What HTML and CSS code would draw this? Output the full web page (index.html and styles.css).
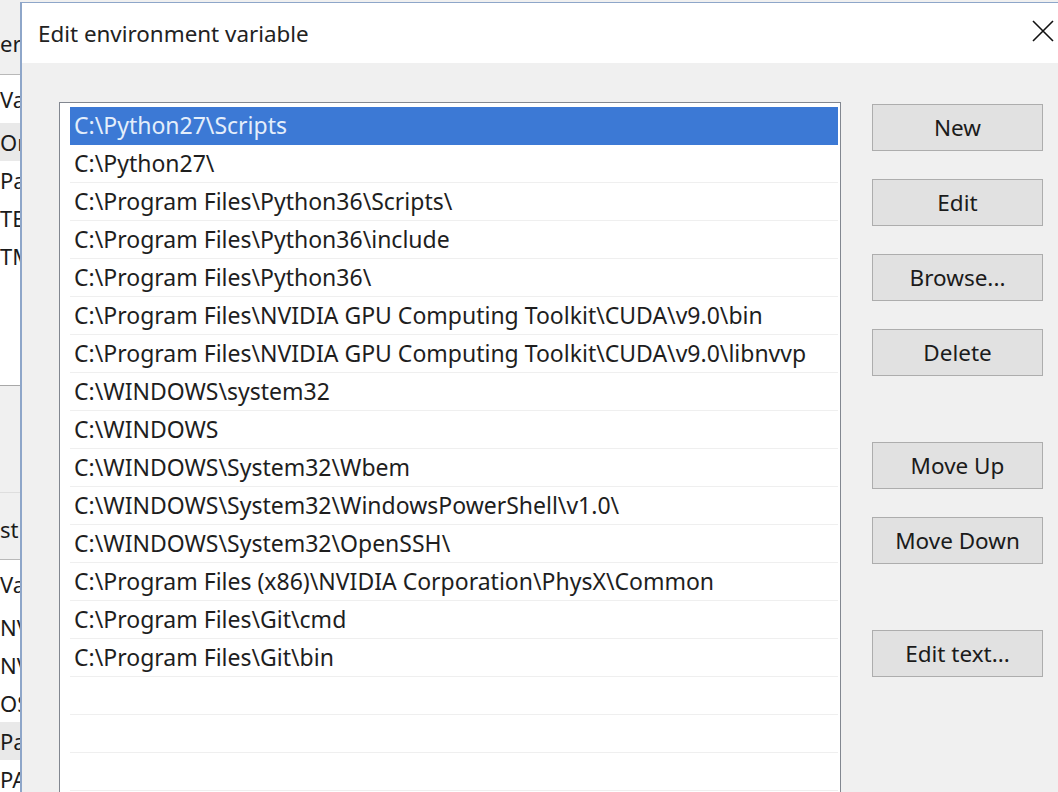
FILE: index.html
```html
<!DOCTYPE html>
<html lang="en">

<head>
    <meta charset="UTF-8">
    <meta name="viewport" content="width=device-width, initial-scale=1.0">
    <title>Edit environment variable</title>
    <link rel="stylesheet" href="styles.css">
</head>

<body>

    <div class="screen">

        <!-- the Environment Variables window peeking out on the left -->
        <div class="behind">
            <div class="behind__label">er</div>
            <div class="behind__list">
                <div class="behind__head">Va</div>
                <div class="behind__row behind__row--selected">On</div>
                <div class="behind__row">Pa</div>
                <div class="behind__row">TE</div>
                <div class="behind__row">TM</div>
            </div>
            <div class="behind__buttons"></div>
            <div class="behind__label behind__label--system">st</div>
            <div class="behind__list behind__list--system">
                <div class="behind__head">Va</div>
                <div class="behind__row">NV</div>
                <div class="behind__row">NV</div>
                <div class="behind__row">OS</div>
                <div class="behind__row behind__row--selected">Pa</div>
                <div class="behind__row">PA</div>
            </div>
        </div>

        <div class="dialog">
            <div class="dialog__titlebar">
                <span class="dialog__title">Edit environment variable</span>
                <button class="dialog__close" aria-label="Close">
                    <svg width="22" height="22" viewBox="0 0 22 22">
                        <path d="M1 1 L21 21 M21 1 L1 21" stroke="#111" stroke-width="1.6" fill="none" />
                    </svg>
                </button>
            </div>

            <div class="dialog__body">
                <ul class="paths">
                    <li class="paths__item paths__item--selected">C:\Python27\Scripts</li>
                    <li class="paths__item">C:\Python27\</li>
                    <li class="paths__item">C:\Program Files\Python36\Scripts\</li>
                    <li class="paths__item">C:\Program Files\Python36\include</li>
                    <li class="paths__item">C:\Program Files\Python36\</li>
                    <li class="paths__item">C:\Program Files\NVIDIA GPU Computing Toolkit\CUDA\v9.0\bin</li>
                    <li class="paths__item">C:\Program Files\NVIDIA GPU Computing Toolkit\CUDA\v9.0\libnvvp</li>
                    <li class="paths__item">C:\WINDOWS\system32</li>
                    <li class="paths__item">C:\WINDOWS</li>
                    <li class="paths__item">C:\WINDOWS\System32\Wbem</li>
                    <li class="paths__item">C:\WINDOWS\System32\WindowsPowerShell\v1.0\</li>
                    <li class="paths__item">C:\WINDOWS\System32\OpenSSH\</li>
                    <li class="paths__item">C:\Program Files (x86)\NVIDIA Corporation\PhysX\Common</li>
                    <li class="paths__item">C:\Program Files\Git\cmd</li>
                    <li class="paths__item">C:\Program Files\Git\bin</li>
                    <li class="paths__item"></li>
                    <li class="paths__item"></li>
                    <li class="paths__item"></li>
                </ul>

                <div class="actions">
                    <div class="actions__group">
                        <button class="actions__btn">New</button>
                        <button class="actions__btn">Edit</button>
                        <button class="actions__btn">Browse...</button>
                        <button class="actions__btn">Delete</button>
                    </div>
                    <div class="actions__group">
                        <button class="actions__btn">Move Up</button>
                        <button class="actions__btn">Move Down</button>
                    </div>
                    <div class="actions__group">
                        <button class="actions__btn">Edit text...</button>
                    </div>
                </div>
            </div>
        </div>

    </div>

</body>

</html>
```

FILE: styles.css
```css
body {
    margin: 0;
    height: 792px;
    overflow: hidden;
    background-color: #f0f0f0;
    font-family: "Noto Sans", "Open Sans", sans-serif;
    color: #1b1b1b;
}

.screen {
    display: flex;
    height: 792px;
}

/* window behind the dialog */
.behind {
    width: 20px;
    flex-shrink: 0;
    overflow: hidden;
    white-space: nowrap;
    font-size: 22px;
    background-color: #f0f0f0;
}

.behind__label {
    height: 74px;
    line-height: 28px;
    padding-top: 29px;
    box-sizing: border-box;
}

.behind__label--system {
    height: 66px;
    padding-top: 22px;
}

.behind__list {
    height: 312px;
    background-color: #fff;
    border-top: 1px solid #b9b9b9;
    border-bottom: 1px solid #a8a8a8;
    box-sizing: border-box;
}

.behind__list--system {
    height: 240px;
    border-bottom: none;
}

.behind__head {
    height: 48px;
    line-height: 48px;
}

.behind__row {
    height: 38px;
    line-height: 38px;
}

.behind__row--selected {
    background-color: #e9e9e9;
}

.behind__buttons {
    height: 106px;
    border-bottom: 1px solid #dedede;
}

/* the dialog */
.dialog {
    flex: 1;
    margin-top: 2px;
    border-top: 1px solid #8ea6c9;
    border-left: 2px solid #8ea6c9;
    display: flex;
    flex-direction: column;
    min-width: 0;
}

.dialog__titlebar {
    height: 60px;
    background-color: #fff;
    display: flex;
    align-items: center;
    justify-content: space-between;
    padding-left: 16px;
    padding-right: 4px;
}

.dialog__title {
    font-size: 22.4px;
    color: #222;
}

.dialog__close {
    background: none;
    border: none;
    padding: 0;
    width: 22px;
    height: 22px;
    margin-top: -4px;
}

.dialog__body {
    flex: 1;
    display: flex;
    gap: 31px;
    padding: 39px 15px 0 37px;
    overflow: hidden;
}

.paths {
    flex: 1;
    list-style: none;
    margin: 0;
    padding: 4px 2px 0 10px;
    height: 760px;
    background-color: #fff;
    border: 1px solid #828790;
    box-sizing: border-box;
    font-size: 23px;
}

.paths__item {
    height: 38px;
    line-height: 37px;
    padding-left: 4px;
    border-bottom: 1px solid #efefef;
    box-sizing: border-box;
    white-space: nowrap;
    color: #1e1e1e;
}

.paths__item--selected {
    background-color: #3c79d5;
    color: #e4eefb;
    border-bottom-color: #3c79d5;
}

.actions {
    width: 171px;
    flex-shrink: 0;
    padding-top: 2px;
}

.actions__group {
    display: flex;
    flex-direction: column;
    gap: 28px;
}

.actions__group + .actions__group {
    margin-top: 66px;
}

.actions__btn {
    height: 47px;
    font-family: inherit;
    font-size: 22.5px;
    color: #1b1b1b;
    background-color: #e1e1e1;
    border: 1px solid #adadad;
    padding: 0;
}
```
